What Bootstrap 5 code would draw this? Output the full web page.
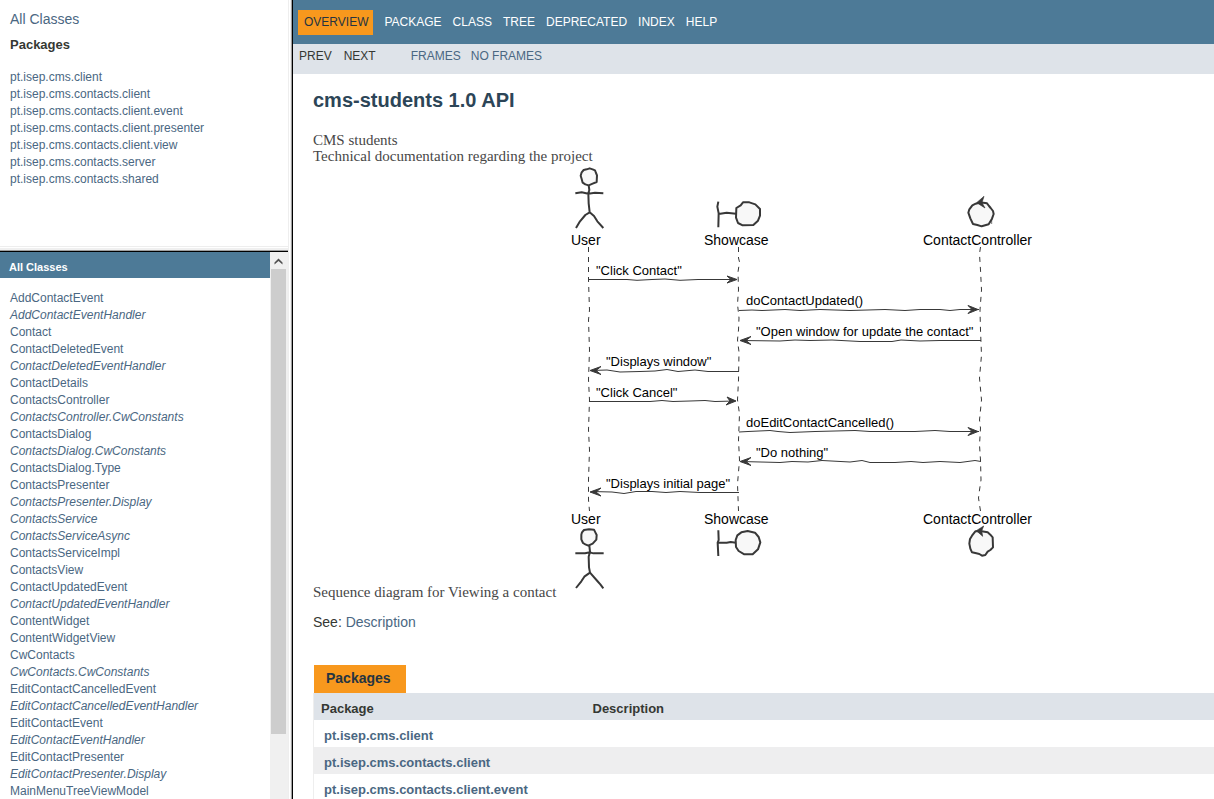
<!DOCTYPE html>
<html lang="en">
<head>
<meta charset="utf-8">
<meta name="viewport" content="width=device-width, initial-scale=1">
<title>Overview (cms-students 1.0 API)</title>
<link href="https://cdn.jsdelivr.net/npm/bootstrap@5.3.0/dist/css/bootstrap.min.css" rel="stylesheet">
<style>
  body { font-family: "Liberation Sans", Arial, sans-serif; font-size: 14px; line-height: 16px; color: #353833; }
  a { color: #4a6782; text-decoration: none; }
  a:hover { color: #bb7a2a; }
  .side { flex: 0 0 288px; }
  .packages-pane { flex: 0 0 246px; padding: 11px 10px 0; }
  .split-row { flex: 0 0 6px; border-top: 1px solid #eee; border-bottom: 1px solid #000; box-shadow: inset 0 -1px #a0a0a0, inset 0 -3px #f0f0f0; }
  .split-col { flex: 0 0 5px; border-left: 1px solid #eee; border-right: 1px solid #000; box-shadow: inset -1px 0 #a0a0a0, inset -2px 0 #f0f0f0; }
  .side-title { font-size: 13px; line-height: 16px; font-weight: 700; margin: 10px 0 16px; }
  .name-list { font-size: 12px; line-height: 17px; margin: 0; }
  .class-list { padding-left: 10px; }
  .class-bar { background: #4d7a97; color: #fff; font-size: 11px; line-height: 16px; font-weight: 700; padding: 7px 9px 3px; margin: 0 0 12px; }
  .scroll-track { flex: 0 0 18px; background: #f0f0f0; padding: 0 2px 0 1px; }
  .scroll-arrow { height: 17px; padding: 5px 3px; }
  .scroll-thumb { height: 465px; background: #cdcdcd; }
  .top-bar { background: #4d7a97; font-size: 12px; line-height: 15px; padding: 10px 5px 9px; }
  .top-bar ul { gap: 11px; }
  .top-bar li { padding: 5px 0; }
  .top-bar a { color: #fff; }
  .top-bar .current { background: #f8981d; color: #253441; padding: 5px 5px 5px 6px; }
  .sub-bar { background: #dee3e9; font-size: 12px; line-height: 14px; padding: 5px 6px 11px; gap: 12px; }
  .frame-links { gap: 10px; margin-left: 23px; }
  .page-body { padding: 15px 0 0 20px; }
  .page-title { font-size: 20px; line-height: 22px; font-weight: 700; color: #2c4557; margin: 0 0 21px; }
  .intro { font-family: "Liberation Serif", Georgia, serif; font-size: 15px; line-height: 16px; color: #474747; }
  .figure-caption-text { flex: 0 0 251px; }
  .sequence { font-family: "Liberation Sans", Arial, sans-serif; flex: 0 0 480px; }
  .see-also { margin: 14px 0 35px; }
  .pkg-caption { background: #f8981d; color: #253441; font-size: 14px; font-weight: 700; line-height: 16px; padding: 5px 15px 7px 12px; margin: 0 0 0 1px; }
  .pkg-table { font-size: 13px; line-height: 15px; border-left: 1px solid #eee; font-weight: 700; }
  .pkg-table th { background: #dee3e9; padding: 8px 7px 4px; height: 27px; }
  .pkg-table td { padding: 8px 10px 4px; height: 27px; }
  .pkg-table tbody tr:nth-child(even) { background: #eeeeef; }
  .col-name { width: 272px; }
</style>
</head>
<body>
<div class="d-flex vh-100 overflow-hidden">
  <aside class="side d-flex flex-column">
    <nav class="packages-pane" aria-label="Packages">
      <a href="#">All Classes</a>
      <h2 class="side-title">Packages</h2>
      <ul class="name-list list-unstyled">
        <li><a href="#">pt.isep.cms.client</a></li>
        <li><a href="#">pt.isep.cms.contacts.client</a></li>
        <li><a href="#">pt.isep.cms.contacts.client.event</a></li>
        <li><a href="#">pt.isep.cms.contacts.client.presenter</a></li>
        <li><a href="#">pt.isep.cms.contacts.client.view</a></li>
        <li><a href="#">pt.isep.cms.contacts.server</a></li>
        <li><a href="#">pt.isep.cms.contacts.shared</a></li>
      </ul>
    </nav>
    <div class="split-row"></div>
    <div class="d-flex flex-grow-1 overflow-hidden">
      <nav class="flex-grow-1" aria-label="All classes">
        <h1 class="class-bar">All Classes</h1>
        <ul class="name-list class-list list-unstyled">
          <li><a href="#">AddContactEvent</a></li>
          <li><a href="#" class="fst-italic">AddContactEventHandler</a></li>
          <li><a href="#">Contact</a></li>
          <li><a href="#">ContactDeletedEvent</a></li>
          <li><a href="#" class="fst-italic">ContactDeletedEventHandler</a></li>
          <li><a href="#">ContactDetails</a></li>
          <li><a href="#">ContactsController</a></li>
          <li><a href="#" class="fst-italic">ContactsController.CwConstants</a></li>
          <li><a href="#">ContactsDialog</a></li>
          <li><a href="#" class="fst-italic">ContactsDialog.CwConstants</a></li>
          <li><a href="#">ContactsDialog.Type</a></li>
          <li><a href="#">ContactsPresenter</a></li>
          <li><a href="#" class="fst-italic">ContactsPresenter.Display</a></li>
          <li><a href="#" class="fst-italic">ContactsService</a></li>
          <li><a href="#" class="fst-italic">ContactsServiceAsync</a></li>
          <li><a href="#">ContactsServiceImpl</a></li>
          <li><a href="#">ContactsView</a></li>
          <li><a href="#">ContactUpdatedEvent</a></li>
          <li><a href="#" class="fst-italic">ContactUpdatedEventHandler</a></li>
          <li><a href="#">ContentWidget</a></li>
          <li><a href="#">ContentWidgetView</a></li>
          <li><a href="#">CwContacts</a></li>
          <li><a href="#" class="fst-italic">CwContacts.CwConstants</a></li>
          <li><a href="#">EditContactCancelledEvent</a></li>
          <li><a href="#" class="fst-italic">EditContactCancelledEventHandler</a></li>
          <li><a href="#">EditContactEvent</a></li>
          <li><a href="#" class="fst-italic">EditContactEventHandler</a></li>
          <li><a href="#">EditContactPresenter</a></li>
          <li><a href="#" class="fst-italic">EditContactPresenter.Display</a></li>
          <li><a href="#">MainMenuTreeViewModel</a></li>
        </ul>
      </nav>
      <div class="scroll-track" aria-hidden="true">
        <div class="scroll-arrow"><svg class="d-block" width="9" height="8"><path d="M0.5 5.500L4.500 1.500 8.500 5.500V7.500L4.500 4 0.500 7.500z" fill="#505050"/></svg></div>
        <div class="scroll-thumb"></div>
      </div>
    </div>
  </aside>
  <div class="split-col"></div>
  <main class="flex-grow-1 overflow-hidden">
    <nav class="top-bar" aria-label="Main">
      <ul class="list-unstyled d-flex mb-0">
        <li class="current">OVERVIEW</li>
        <li><a href="#">PACKAGE</a></li>
        <li><a href="#">CLASS</a></li>
        <li><a href="#">TREE</a></li>
        <li><a href="#">DEPRECATED</a></li>
        <li><a href="#">INDEX</a></li>
        <li><a href="#">HELP</a></li>
      </ul>
    </nav>
    <div class="sub-bar d-flex">
      <span>PREV</span><span>NEXT</span>
      <div class="frame-links d-flex"><a href="#">FRAMES</a><a href="#">NO FRAMES</a></div>
    </div>
    <div class="page-body">
      <h1 class="page-title">cms-students 1.0 API</h1>
      <div class="intro">
        <div>CMS students</div>
        <div>Technical documentation regarding the project</div>
        <div class="d-flex align-items-end">
          <div class="figure-caption-text">Sequence diagram for Viewing a contact</div>
          <svg class="sequence" height="436" viewBox="564 164 480 436" role="img" aria-label="Sequence diagram">
            <g fill="none" stroke="#383838" stroke-width="1" stroke-dasharray="5 5">
              <path d="M588.500 247V280L589.500 310 588.500 320 589.500 350 588.500 380 589.500 400 588.500 430 589.500 450 588.500 480V500L589.500 511"/>
              <path d="M738.500 247V258L739.500 262 738 272 738.500 290 737.500 304 739 318 738.500 330 737.500 340 739 352 738.500 380 737.500 400 739.500 414 738.500 440 739.500 460 737.500 484 738.500 511"/>
              <path d="M980.500 247L979.500 254 980.500 270 981.500 290 980 310 980.500 330 981.500 355 979.500 378 981.500 400 979.500 420 980.500 428 979.500 445 980.500 460 981 480 979.500 490 978.500 498 980.500 511"/>
            </g>
            <g fill="none" stroke="#383838" stroke-width="1">
              <path d="M589 279.500H627L637 280.300 652 279.500 665 279 680 280.300 698 279.500 720 279.500H737"/>
              <path d="M739 310.500L752 310 762 310.500 785 309.500 800 310.500 820 309.500 850 310.500 885 309.500 905 310.500 920 309.500 940 309.500 950 310.500 960 309.500H979"/>
              <path d="M741 340.500L780 341 795 340 810 340.500 832 340 860 341.500 892 341.500 901 340 920 341 940 340.500H981"/>
              <path d="M591 370.500L607 370 620 372 640 371.500 655 371 667 369.500 678 371.500 695 370 708 371.500H739"/>
              <path d="M589 401.500H650L662 400.500 673 401.500 690 401 705 400.500 715 401.500 735 401"/>
              <path d="M739 432L748 431.500 770 430.500 778 431.500 790 432.500 815 431.500 855 430.500 870 431.500 915 431.500 935 430.500 950 431.500H979"/>
              <path d="M741 461.500L780 462.500 792 461.500 808 462 822 460.500 850 462 862 460.500 870 462.500 895 462.500 911 461.500 923 462.500 940 461.500 960 462.500 975 460.500 981 461.500"/>
              <path d="M591 491.500L612 492 624 493.500 636 491.500 652 491.500 666 492.500 680 491.500 700 492.500H739"/>
            </g>
            <g fill="#383838" stroke="#383838" stroke-width="1" stroke-linejoin="round">
              <path d="M737 279.500l-10-3.500 4 3.500-4 3.500z"/>
              <path d="M978 309.500l-10-4 4 4-4 4z"/>
              <path d="M740 340.500l11-4-5 4 5 4z"/>
              <path d="M590 370.500l11-4-5 4 5 4z"/>
              <path d="M736 401l-9-4 3 4-4 4z"/>
              <path d="M978 431.500l-10-4 4 4-4 4z"/>
              <path d="M740 461.500l11-4-5 4 5 4z"/>
              <path d="M590 492l11-4-5 4 5 4z"/>
            </g>
            <!-- hand-drawn participants, top row -->
            <g transform="translate(560 160) scale(.333333)" fill="#f8f8f8" stroke="#383838" stroke-width="6" stroke-linejoin="round">
              <path d="M62 47L65 37 71 30 80 28 89 25 98 28 105 31 108 39 111 46 110 66 98 71 86 76 76 73 68 68 65 57z"/>
              <path d="M86 76L88 90 85 100 86 130 89 157 76 165 60 184 48 204M89 157L102 168 112 184 130 204M46 100L65 97 85 101 105 98 130 100" fill="none"/>
              <path d="M475 125L472 140 476 160 475 202M476 162L500 158 528 161" fill="none"/>
              <path d="M529 144L542 136 549 127H568L586 133 600 147V167L594 182 580 195 548 196 534 189 528 173z"/>
            </g>
            <g transform="translate(700 180) scale(.333333)" fill="#f8f8f8" stroke="#383838" stroke-width="6" stroke-linejoin="round">
              <path d="M805 98L808 88 817 76 827 71 838 68 850 68 861 70 867 78 872 84 879 93 881 102 876 116 866 133 845 139 832 135 819 132 811 115z"/>
              <path d="M852 49L830 68 855 84 846 68z" fill="#383838" stroke-width="2"/>
              <path d="M875 117V132" stroke-width="2"/>
            </g>
            <!-- hand-drawn participants, bottom row -->
            <g transform="translate(560 480) scale(.333333)" fill="#f8f8f8" stroke="#383838" stroke-width="6" stroke-linejoin="round">
              <path d="M66 157L72 150 87 148 102 149 106 157 110 165 109 179 98 191 85 197 76 193 69 189 64 178V164z"/>
              <path d="M88 197L90 215 86 230 87 262 90 278 73 290 64 304 48 324M90 278L112 303 121 313 130 325M46 220H75L90 217 100 220H131" fill="none"/>
              <path d="M475 151L476 180 473 188 475 228M475 188H500L512 186 528 188" fill="none"/>
              <path d="M532 166L544 157 563 153 585 158 596 171 601 187 594 208 578 223H553L536 213 528 201 527 180z"/>
            </g>
            <g transform="translate(880 490) scale(.333333)" fill="#f8f8f8" stroke="#383838" stroke-width="6" stroke-linejoin="round">
              <path d="M286 124L305 124 323 127 331 134 338 142 339 172 331 180 323 185 316 195 306 197 298 192 289 190 276 187 271 176 268 161 270 147 276 137z"/>
              <path d="M311 108L289 122 308 139 305 123z" fill="#383838" stroke-width="2"/>
            </g>
            <g fill="#000" font-size="14">
              <text x="571" y="245">User</text>
              <text x="704" y="245">Showcase</text>
              <text x="923" y="245">ContactController</text>
              <text x="571" y="524">User</text>
              <text x="704" y="524">Showcase</text>
              <text x="923" y="524">ContactController</text>
            </g>
            <g fill="#000" font-size="13">
              <text x="596" y="275">"Click Contact"</text>
              <text x="746" y="305">doContactUpdated()</text>
              <text x="756" y="336">"Open window for update the contact"</text>
              <text x="606" y="366">"Displays window"</text>
              <text x="596" y="397">"Click Cancel"</text>
              <text x="746" y="427">doEditContactCancelled()</text>
              <text x="756" y="457">"Do nothing"</text>
              <text x="606" y="488">"Displays initial page"</text>
            </g>
          </svg>
        </div>
      </div>
      <p class="see-also">See: <a href="#">Description</a></p>
      <div class="d-flex"><h2 class="pkg-caption">Packages</h2></div>
      <table class="pkg-table w-100" aria-label="Packages">
        <thead><tr><th class="col-name" scope="col">Package</th><th scope="col">Description</th></tr></thead>
        <tbody>
          <tr><td><a href="#">pt.isep.cms.client</a></td><td></td></tr>
          <tr><td><a href="#">pt.isep.cms.contacts.client</a></td><td></td></tr>
          <tr><td><a href="#">pt.isep.cms.contacts.client.event</a></td><td></td></tr>
        </tbody>
      </table>
    </div>
  </main>
</div>
<script src="https://cdn.jsdelivr.net/npm/bootstrap@5.3.0/dist/js/bootstrap.bundle.min.js"></script>
</body>
</html>
